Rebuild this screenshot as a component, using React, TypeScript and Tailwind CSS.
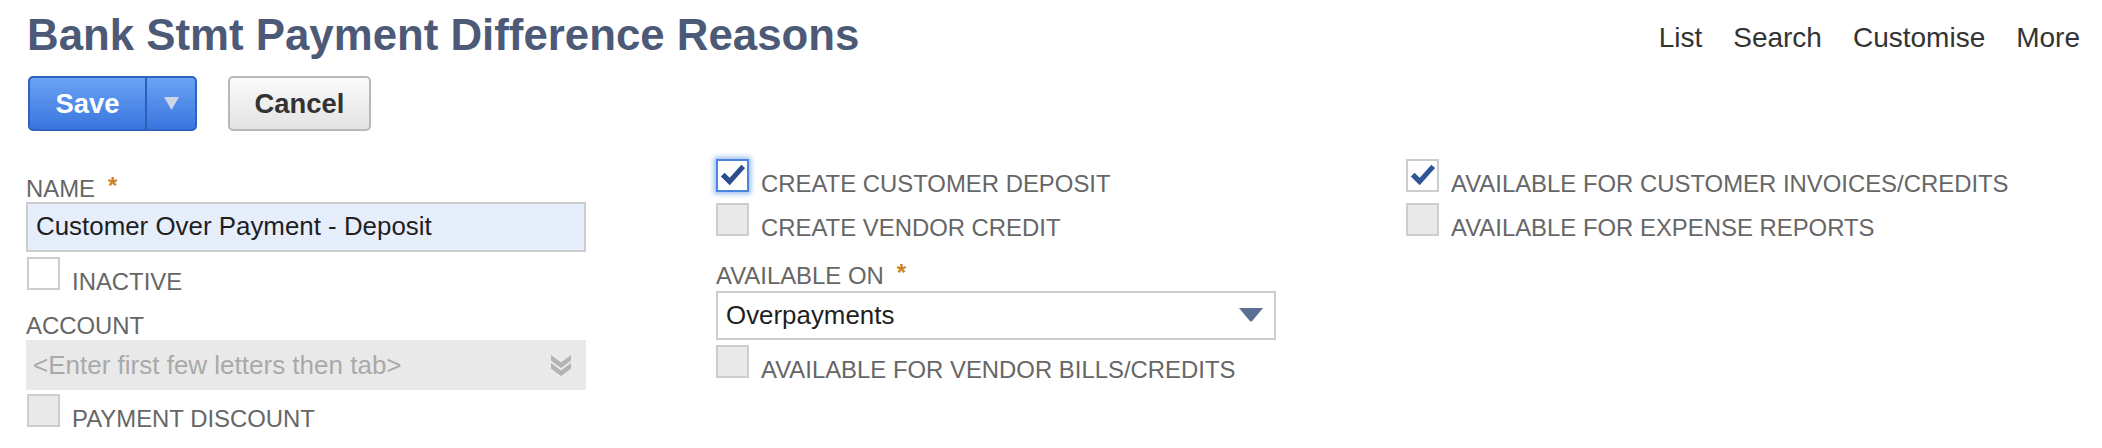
import React from "react";

function Check({ color }: { color: string }) {
  return (
    <svg width="27" height="27" viewBox="0 0 29 29" className="block">
      <path d="M2 15.5 L6 11.5 L11.5 17 L24 3 L28 6.5 L11.5 25 Z" fill={color} />
    </svg>
  );
}

function Box({ variant }: { variant: "focusChecked" | "checked" | "white" | "gray" }) {
  if (variant === "focusChecked") {
    return (
      <div className="w-[33px] h-[33px] shrink-0 border-2 border-[#4a86e0] bg-white shadow-[0_0_5px_2px_rgba(74,134,224,0.55)] flex items-center justify-center">
        <Check color="#2c4d8c" />
      </div>
    );
  }
  if (variant === "checked") {
    return (
      <div className="w-[33px] h-[33px] shrink-0 border-2 border-[#cdcdcd] bg-white flex items-center justify-center">
        <Check color="#2f5597" />
      </div>
    );
  }
  if (variant === "white") {
    return <div className="w-[33px] h-[33px] shrink-0 border-2 border-[#cdcdcd] bg-white" />;
  }
  return <div className="w-[33px] h-[33px] shrink-0 border-2 border-[#cdcdcd] bg-[#e9e9e9]" />;
}

function CheckRow({
  variant,
  label,
  className,
}: {
  variant: "focusChecked" | "checked" | "white" | "gray";
  label: string;
  className?: string;
}) {
  return (
    <div className={"flex items-end " + (className ?? "")}>
      <Box variant={variant} />
      <span className="ml-[12px] text-[23.9px] leading-[17px] text-[#666666] whitespace-nowrap">{label}</span>
    </div>
  );
}

function Label({ text, required, className }: { text: string; required?: boolean; className?: string }) {
  return (
    <div className={"flex items-start text-[23.9px] leading-[24px] text-[#666666] whitespace-nowrap " + (className ?? "")}>
      <span>{text}</span>
      {required && <span className="ml-[13px] -mt-[3px] font-bold text-[#c9821f] text-[24px] leading-[24px]">*</span>}
    </div>
  );
}

export default function App() {
  return (
    <div className="w-[2102px] h-[448px] bg-white overflow-hidden pl-[26px] font-['Liberation_Sans',Arial,sans-serif]">
      {/* Header */}
      <div className="flex justify-between items-start">
        <h1 className="mt-[13px] ml-[1px] text-[43.8px] leading-none font-bold text-[#4c5a78] whitespace-nowrap">
          Bank Stmt Payment Difference Reasons
        </h1>
        <nav className="mt-[24px] mr-[22px] flex gap-[31px] text-[28px] leading-none text-[#333333]">
          <span>List</span>
          <span>Search</span>
          <span>Customise</span>
          <span>More</span>
        </nav>
      </div>

      {/* Buttons */}
      <div className="mt-[19.2px] ml-[2px] flex">
        <div className="flex h-[55px] w-[169px] rounded-[5px] border-2 border-[#2f62c0] bg-linear-to-b from-[#69a3f5] to-[#3a75de] overflow-hidden">
          <div className="w-[115px] flex items-center justify-center text-white font-bold text-[27.4px] leading-none">
            Save
          </div>
          <div className="w-[2px] bg-[#2d5eb9]" />
          <div className="flex-1 flex items-center justify-center">
            <svg width="15" height="13" viewBox="0 0 15 13">
              <path d="M0 0 H15 L7.5 13 Z" fill="#cdd6e8" />
            </svg>
          </div>
        </div>
        <div className="ml-[31px] flex h-[55px] w-[143px] items-center justify-center rounded-[5px] border-2 border-[#b8b8b8] bg-linear-to-b from-[#fbfbfb] to-[#e3e3e3] text-[#333333] font-bold text-[27.4px] leading-none">
          Cancel
        </div>
      </div>

      {/* Form */}
      <div className="mt-[27px] flex gap-[130px]">
        {/* Column 1 */}
        <div className="w-[560px] shrink-0 pt-[19px]">
          <Label text="NAME" required />
          <div className="mt-[1px] h-[50px] border-2 border-[#cccccc] bg-[#e7eefb] flex items-center px-[8px] text-[25.9px] leading-none text-[#1f1f1f] whitespace-nowrap">
            Customer Over Payment - Deposit
          </div>
          <CheckRow variant="white" label="INACTIVE" className="mt-[5px] ml-[1px]" />
          <Label text="ACCOUNT" className="mt-[24px]" />
          <div className="mt-[2px] h-[50px] bg-[#e9e9e9] flex items-center justify-between pl-[7px] pr-[13px] text-[26px] leading-none text-[#a9a9a9] whitespace-nowrap">
            <span>&lt;Enter first few letters then tab&gt;</span>
            <svg width="24" height="24" viewBox="0 0 24 24">
              <path d="M2 2 L12 9.5 L22 2 L22 7.5 L12 15 L2 7.5 Z" fill="#b3b3b3" />
              <path d="M2 10 L12 17.5 L22 10 L22 15.5 L12 23 L2 15.5 Z" fill="#b3b3b3" />
            </svg>
          </div>
          <CheckRow variant="gray" label="PAYMENT DISCOUNT" className="mt-[4px] ml-[1px]" />
        </div>

        {/* Column 2 */}
        <div className="w-[560px] shrink-0 pt-[1px]">
          <CheckRow variant="focusChecked" label="CREATE CUSTOMER DEPOSIT" />
          <CheckRow variant="gray" label="CREATE VENDOR CREDIT" className="mt-[11px]" />
          <Label text="AVAILABLE ON" required className="mt-[28px]" />
          <div className="mt-[3px] h-[49px] border-2 border-[#cccccc] bg-white flex items-center justify-between pl-[8px] pr-[11px] text-[25.9px] leading-none text-[#1f1f1f]">
            <span>Overpayments</span>
            <svg width="24" height="14" viewBox="0 0 24 14">
              <path d="M0 0 H24 L13.6 12.6 Q12 14.4 10.4 12.6 Z" fill="#5a6e96" />
            </svg>
          </div>
          <CheckRow variant="gray" label="AVAILABLE FOR VENDOR BILLS/CREDITS" className="mt-[5px]" />
        </div>

        {/* Column 3 */}
        <div className="w-[560px] shrink-0 pt-[1px]">
          <CheckRow variant="checked" label="AVAILABLE FOR CUSTOMER INVOICES/CREDITS" />
          <CheckRow variant="gray" label="AVAILABLE FOR EXPENSE REPORTS" className="mt-[11px]" />
        </div>
      </div>
    </div>
  );
}
